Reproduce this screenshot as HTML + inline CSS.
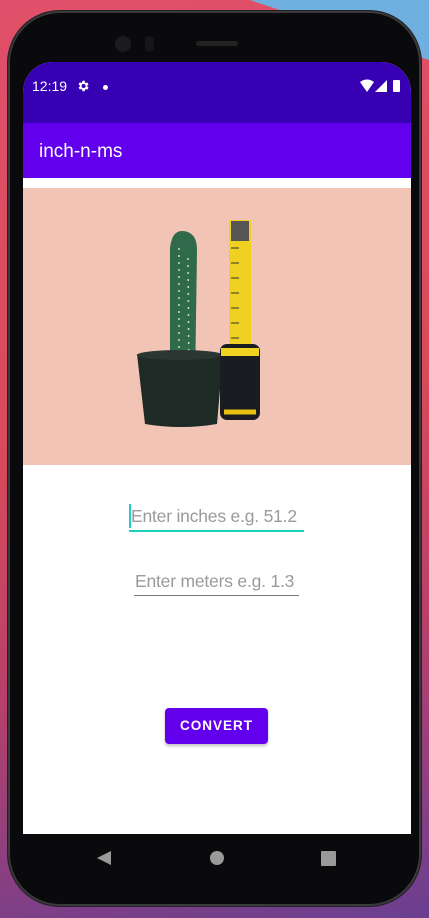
<!DOCTYPE html>
<html><head><meta charset="utf-8">
<style>
html,body{margin:0;padding:0;width:429px;height:918px;overflow:hidden;font-family:"Liberation Sans",sans-serif;}
body{position:relative;background:linear-gradient(170deg,#e0506a 0%,#d94a5a 45%,#b8406a 70%,#6a3f90 100%);}
.phone{position:absolute;left:8px;top:11px;width:413px;height:895px;background:#0a0a0c;border-radius:52px;box-shadow:0 0 0 2px #3a3a3e inset,0 0 0 1px #222;}
.screen{position:absolute;left:23px;top:62px;width:388px;height:772px;background:#fff;border-radius:30px 30px 0 0;overflow:hidden;}
.status{position:absolute;left:0;top:0;width:388px;height:61px;background:#3700b3;}
.toolbar{position:absolute;left:0;top:61px;width:388px;height:55px;background:#6200ee;}
.toolbar span{position:absolute;left:16px;top:18px;color:#fff;font-size:19px;}
.img{position:absolute;left:0;top:126px;width:388px;height:277px;background:#f1c4b5;}
.nav{position:absolute;left:23px;top:834px;width:388px;height:60px;}
.f{position:absolute;color:#9a9a9a;font-size:17.5px;white-space:nowrap;letter-spacing:-0.2px;}
</style></head><body>
<svg style="position:absolute;left:0;top:0" width="429" height="918"><polygon points="250,0 429,0 429,60" fill="#6fb0e0"/></svg>
<div class="phone"></div>
<div style="position:absolute;left:115px;top:36px;width:16px;height:16px;border-radius:50%;background:#1c1c20"></div>
<div style="position:absolute;left:145px;top:36px;width:9px;height:16px;border-radius:4px;background:#16161a"></div>
<div style="position:absolute;left:196px;top:41px;width:42px;height:5px;border-radius:3px;background:#222"></div>
<div class="screen">
  <div class="status">
    <span style="position:absolute;left:9px;top:16px;color:#fff;font-size:14px">12:19</span>
    <svg style="position:absolute;left:53px;top:17px" width="14" height="14" viewBox="0 0 24 24"><path fill="#fff" d="M19.4 13a7.5 7.5 0 0 0 0-2l2.1-1.6-2-3.5-2.5 1a7 7 0 0 0-1.7-1L15 3h-4l-.4 2.7a7 7 0 0 0-1.7 1l-2.5-1-2 3.5L6.6 11a7.5 7.5 0 0 0 0 2l-2.1 1.6 2 3.5 2.5-1a7 7 0 0 0 1.7 1L11 21h4l.4-2.7a7 7 0 0 0 1.7-1l2.5 1 2-3.5zM13 15.5a3.5 3.5 0 1 1 0-7 3.5 3.5 0 0 1 0 7z"/></svg>
    <div style="position:absolute;left:80px;top:23px;width:5px;height:5px;border-radius:50%;background:#fff"></div>
    <svg style="position:absolute;left:337px;top:17px" width="44" height="14" viewBox="0 0 44 14"><path fill="#fff" d="M0 3 Q7 -2 14 3 L7 13Z"/><path fill="#fff" d="M27 1 L27 13 L15 13Z"/><rect x="33" y="1" width="7" height="12" rx="1" fill="#fff"/></svg>
  </div>
  <div class="toolbar"><span>inch-n-ms</span></div>
  <div class="img">
    <svg width="388" height="277" viewBox="0 0 388 277">
      <path d="M147 200 L147 60 Q149 42 160 43 Q174 44 174 62 L172 200Z" fill="#2f6b4a"/>
      <path d="M156 60 L156 190 M165 70 L166 195" stroke="#cfd8c0" stroke-width="1.5" stroke-dasharray="2 5"/>
      <path d="M114 166 L200 166 L194 236 Q158 242 122 236Z" fill="#1e2a26"/>
      <ellipse cx="157" cy="167" rx="43" ry="5" fill="#2a3632"/>
      <rect x="206" y="32" width="22" height="128" fill="#f0d020"/>
      <path d="M208 45 L216 45 M208 60 L216 60 M208 75 L216 75 M208 90 L216 90 M208 105 L216 105 M208 120 L216 120 M208 135 L216 135 M208 150 L216 150" stroke="#333" stroke-width="1"/>
      <rect x="208" y="33" width="18" height="20" fill="#555"/>
      <rect x="197" y="156" width="40" height="76" rx="7" fill="#1a1c22"/>
      <path d="M201 224 L233 224" stroke="#e8c010" stroke-width="5"/>
      <rect x="198" y="160" width="38" height="8" fill="#f0d020"/>
    </svg>
  </div>
  <div style="position:absolute;left:0;top:116px;width:388px;height:10px;background:#fff"></div>
</div>
<div class="f" style="left:131px;top:506px">Enter inches e.g. 51.2</div>
<div style="position:absolute;left:129px;top:504px;width:2px;height:24px;background:#1cd0c0"></div>
<div style="position:absolute;left:129px;top:530px;width:175px;height:2px;background:#1cd0c0"></div>
<div class="f" style="left:135px;top:571px">Enter meters e.g. 1.3</div>
<div style="position:absolute;left:134px;top:595px;width:165px;height:1px;background:#777"></div>
<div style="position:absolute;left:165px;top:708px;width:103px;height:36px;background:#6200ee;border-radius:4px;box-shadow:0 2px 3px rgba(0,0,0,.25);color:#fff;font-size:13.5px;font-weight:bold;letter-spacing:1px;text-align:center;line-height:36px">CONVERT</div>
<div class="nav">
  <svg width="388" height="60" viewBox="0 0 388 60"><path d="M74 24 L88 17 L88 31Z" fill="#9a9a9a"/><circle cx="194" cy="24" r="7" fill="#9a9a9a"/><rect x="298" y="17" width="15" height="15" rx="1" fill="#9a9a9a"/></svg>
</div>
</body></html>
